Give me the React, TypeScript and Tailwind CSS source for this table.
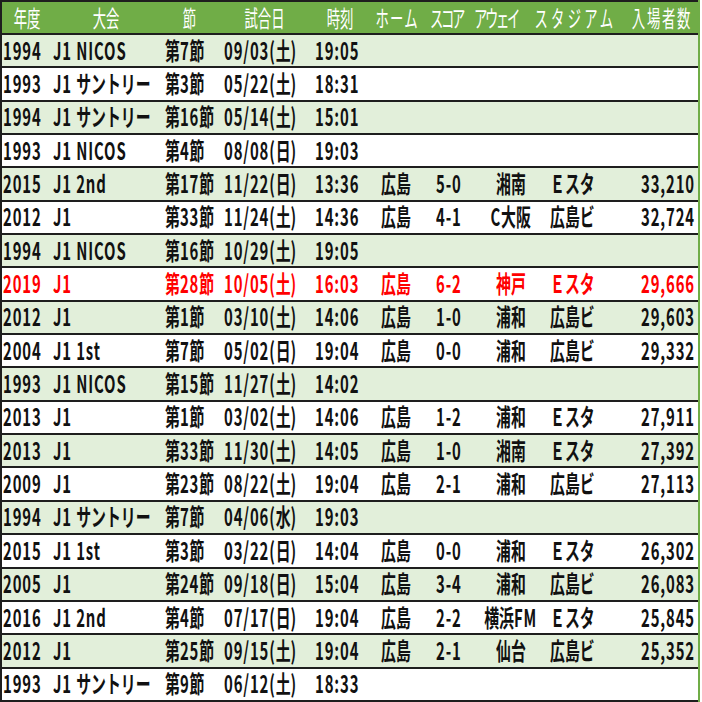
import React from "react";

type Row = { c: string[]; red?: boolean };

const rows: Row[] = [
  { c: ["1994", "J1 NICOS", "第7節", "09/03(土)", "19:05", "", "", "", "", ""] },
  { c: ["1993", "J1 サントリー", "第3節", "05/22(土)", "18:31", "", "", "", "", ""] },
  { c: ["1994", "J1 サントリー", "第16節", "05/14(土)", "15:01", "", "", "", "", ""] },
  { c: ["1993", "J1 NICOS", "第4節", "08/08(日)", "19:03", "", "", "", "", ""] },
  { c: ["2015", "J1 2nd", "第17節", "11/22(日)", "13:36", "広島", "5-0", "湘南", "Ｅスタ", "33,210"] },
  { c: ["2012", "J1", "第33節", "11/24(土)", "14:36", "広島", "4-1", "C大阪", "広島ビ", "32,724"] },
  { c: ["1994", "J1 NICOS", "第16節", "10/29(土)", "19:05", "", "", "", "", ""] },
  { c: ["2019", "J1", "第28節", "10/05(土)", "16:03", "広島", "6-2", "神戸", "Ｅスタ", "29,666"], red: true },
  { c: ["2012", "J1", "第1節", "03/10(土)", "14:06", "広島", "1-0", "浦和", "広島ビ", "29,603"] },
  { c: ["2004", "J1 1st", "第7節", "05/02(日)", "19:04", "広島", "0-0", "浦和", "広島ビ", "29,332"] },
  { c: ["1993", "J1 NICOS", "第15節", "11/27(土)", "14:02", "", "", "", "", ""] },
  { c: ["2013", "J1", "第1節", "03/02(土)", "14:06", "広島", "1-2", "浦和", "Ｅスタ", "27,911"] },
  { c: ["2013", "J1", "第33節", "11/30(土)", "14:05", "広島", "1-0", "湘南", "Ｅスタ", "27,392"] },
  { c: ["2009", "J1", "第23節", "08/22(土)", "19:04", "広島", "2-1", "浦和", "広島ビ", "27,113"] },
  { c: ["1994", "J1 サントリー", "第7節", "04/06(水)", "19:03", "", "", "", "", ""] },
  { c: ["2015", "J1 1st", "第3節", "03/22(日)", "14:04", "広島", "0-0", "浦和", "Ｅスタ", "26,302"] },
  { c: ["2005", "J1", "第24節", "09/18(日)", "15:04", "広島", "3-4", "浦和", "広島ビ", "26,083"] },
  { c: ["2016", "J1 2nd", "第4節", "07/17(日)", "19:04", "広島", "2-2", "横浜FM", "Ｅスタ", "25,845"] },
  { c: ["2012", "J1", "第25節", "09/15(土)", "19:04", "広島", "2-1", "仙台", "広島ビ", "25,352"] },
  { c: ["1993", "J1 サントリー", "第9節", "06/12(土)", "18:33", "", "", "", "", ""] },
];

const headers: { t: string; w: string; tr: string }[] = [
  { t: "年度", w: "w-[50px]", tr: "tracking-[0px]" },
  { t: "大会", w: "w-[108px]", tr: "tracking-[0px]" },
  { t: "節", w: "w-[58px]", tr: "tracking-[0px]" },
  { t: "試合日", w: "w-[92px]", tr: "tracking-[0px]" },
  { t: "時刻", w: "w-[60px]", tr: "tracking-[0px]" },
  { t: "ホーム", w: "w-[55px]", tr: "tracking-[2px]" },
  { t: "スコア", w: "w-[42px]", tr: "tracking-[-4px]" },
  { t: "アウェイ", w: "w-[58px]", tr: "tracking-[-4px]" },
  { t: "スタジアム", w: "w-[100px]", tr: "tracking-[5.5px]" },
  { t: "入場者数", w: "w-[73px]", tr: "tracking-[3px]" },
];

type Col = { cell: string; span: string };
const cols: Col[] = [
  { cell: "w-[50px] justify-start pl-[1px]", span: "origin-left" },
  { cell: "w-[108px] justify-start pl-[1px]", span: "origin-left" },
  { cell: "w-[58px] justify-start pl-[5px]", span: "origin-left" },
  { cell: "w-[92px] justify-start pl-[6px]", span: "origin-left" },
  { cell: "w-[60px] justify-start pl-[5px]", span: "origin-left" },
  { cell: "w-[55px] justify-start pl-[11px]", span: "origin-left" },
  { cell: "w-[47px] justify-start pl-[11px]", span: "origin-left" },
  { cell: "w-[78px] justify-center", span: "origin-center" },
  { cell: "w-[75px] justify-start", span: "origin-left" },
  { cell: "w-[73px] justify-end pr-[3px]", span: "origin-right" },
];

function runs(s: string) {
  const out: { a: boolean; t: string }[] = [];
  for (const ch of s) {
    const a = ch.charCodeAt(0) < 128;
    const last = out[out.length - 1];
    if (last && last.a === a) last.t += ch;
    else out.push({ a, t: ch });
  }
  return out;
}

function Text({ v }: { v: string }) {
  return (
    <>
      {runs(v).map((r, i) =>
        r.a ? (
          <span key={i} className="tracking-[1.4px]">
            {r.t}
          </span>
        ) : (
          <span key={i}>{r.t}</span>
        )
      )}
    </>
  );
}

export default function App() {
  return (
    <div
      className="w-[702px] h-[702px] overflow-hidden bg-white"
      style={{ fontFamily: '"Noto Sans CJK JP", "Noto Sans", sans-serif' }}
    >
      <div className="w-[700px] border-l-2 border-l-[#1e1e1e] border-r-2 border-r-[#70ad47]">
        <div className="flex h-[35px] bg-[#70ad47] border-t-2 border-b-2 border-[#1e1e1e] text-white">
          {headers.map((h, i) => (
            <div key={i} className={`${h.w} flex items-center justify-center overflow-visible`}>
              <span
                className={`inline-block whitespace-nowrap text-[23px] leading-none font-normal origin-center [transform:scaleX(0.58)] ${h.tr}`}
              >
                {h.t}
              </span>
            </div>
          ))}
        </div>
        {rows.map((r, ri) => (
          <div
            key={ri}
            className={`flex h-[33.35px] border-b-2 border-[#1e1e1e] ${ri % 2 === 0 ? "bg-[#e2efda]" : "bg-white"} ${
              r.red ? "text-[#ff0000]" : "text-[#111]"
            }`}
          >
            {r.c.map((v, ci) => (
              <div key={ci} className={`${cols[ci].cell} flex items-center pb-[2px] overflow-visible`}>
                <span
                  className={`inline-block whitespace-nowrap text-[24px] leading-none font-semibold ${cols[ci].span} [transform:scaleX(0.62)]`}
                >
                  <Text v={v} />
                </span>
              </div>
            ))}
          </div>
        ))}
      </div>
    </div>
  );
}
